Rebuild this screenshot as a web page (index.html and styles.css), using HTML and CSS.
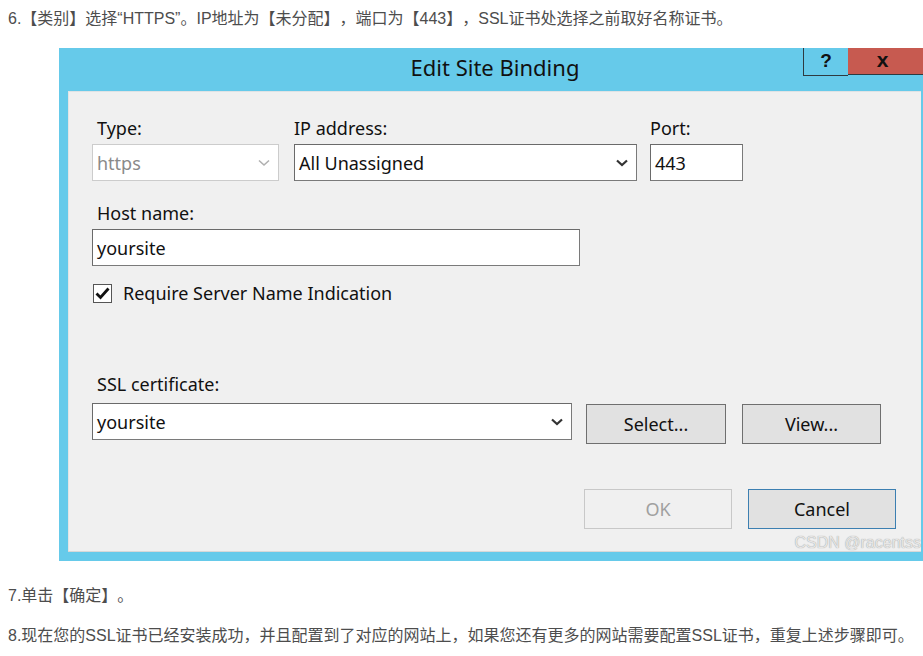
FILE: index.html
```html
<!DOCTYPE html>
<html lang="zh">
<head>
<meta charset="utf-8">
<title>Edit Site Binding</title>
<link rel="stylesheet" href="styles.css">
</head>
<body>
<p class="step step-first">6.【类别】选择“HTTPS”。IP地址为【未分配】，端口为【443】，SSL证书处选择之前取好名称证书。</p>

<div class="dialog">
  <div class="titlebar">
    <div class="title">Edit Site Binding</div>
    <div class="tb-buttons">
      <div class="tb-help">?</div>
      <div class="tb-close">x</div>
    </div>
  </div>
  <div class="panel">
    <div class="row row-top">
      <div class="field f-type">
        <div class="label">Type:</div>
        <div class="box select disabled"><span>https</span>
          <svg class="chev" width="12" height="8" viewBox="0 0 12 8"><path d="M1 1.5 L6 6 L11 1.5" fill="none" stroke="currentColor" stroke-width="1.6"/></svg>
        </div>
      </div>
      <div class="field f-ip">
        <div class="label">IP address:</div>
        <div class="box select"><span>All Unassigned</span>
          <svg class="chev" width="12" height="8" viewBox="0 0 12 8"><path d="M1 1.5 L6 6 L11 1.5" fill="none" stroke="currentColor" stroke-width="2.2"/></svg>
        </div>
      </div>
      <div class="field f-port">
        <div class="label">Port:</div>
        <div class="box"><span>443</span></div>
      </div>
    </div>

    <div class="field f-host">
      <div class="label">Host name:</div>
      <div class="box"><span>yoursite</span></div>
    </div>

    <div class="check-row">
      <div class="checkbox">
        <svg width="15" height="13" viewBox="0 0 15 13"><path d="M1.5 6.5 L5.5 10.5 L13.5 1.5" fill="none" stroke="#111" stroke-width="2.8"/></svg>
      </div>
      <div class="check-label">Require Server Name Indication</div>
    </div>

    <div class="field f-ssl">
      <div class="label">SSL certificate:</div>
      <div class="ssl-row">
        <div class="box select ssl-select"><span>yoursite</span>
          <svg class="chev" width="12" height="8" viewBox="0 0 12 8"><path d="M1 1.5 L6 6 L11 1.5" fill="none" stroke="currentColor" stroke-width="2.2"/></svg>
        </div>
        <div class="btn btn-select">Select...</div>
        <div class="btn btn-view">View...</div>
      </div>
    </div>

    <div class="footer">
      <div class="btn btn-ok">OK</div>
      <div class="btn btn-cancel">Cancel</div>
    </div>
  </div>
  <div class="watermark">CSDN @racentss</div>
</div>

<p class="step step-7">7.单击【确定】。</p>
<p class="step step-8">8.现在您的SSL证书已经安装成功，并且配置到了对应的网站上，如果您还有更多的网站需要配置SSL证书，重复上述步骤即可。</p>
</body>
</html>
```

FILE: styles.css
```css
html, body {
  margin: 0;
  padding: 0;
  background: #ffffff;
}

body {
  width: 923px;
  height: 656px;
  overflow: hidden;
  font-family: "Liberation Sans", "Noto Sans CJK SC", sans-serif;
}

.step {
  margin: 0;
  padding-left: 8px;
  font-size: 16px;
  line-height: 22px;
  color: #4d4d4d;
  white-space: nowrap;
  text-spacing-trim: space-all;
}

.step-first { padding-top: 8px; }
.step-7 { margin-top: 24px; }
.step-8 { margin-top: 18px; }

.dialog {
  position: relative;
  margin-top: 18px;
  margin-left: 59px;
  width: 864px;
  height: 513px;
  background: #66caea;
  display: flex;
  flex-direction: column;
  font-family: "Noto Sans", "Open Sans", sans-serif;
  color: #000;
}

.titlebar {
  height: 43px;
  display: flex;
  position: relative;
}

.title {
  flex: 1;
  text-align: center;
  font-size: 22px;
  line-height: 38px;
  color: #111;
  padding-left: 8px;
}

.tb-buttons {
  position: absolute;
  top: 0;
  right: 0;
  display: flex;
}

.tb-help {
  width: 44px;
  height: 27px;
  border-left: 1px solid #2e3a40;
  border-bottom: 1px solid #2e3a40;
  text-align: center;
  font-family: "Liberation Sans", sans-serif;
  font-weight: bold;
  font-size: 19px;
  line-height: 25px;
  color: #111;
}

.tb-close {
  width: 75px;
  height: 27px;
  background: #c75a50;
  border-bottom: 1px solid #2e3a40;
  text-align: center;
  font-family: "Liberation Sans", sans-serif;
  font-weight: bold;
  font-size: 21px;
  line-height: 23px;
  color: #111;
  padding-right: 6px;
  box-sizing: border-box;
}

.panel {
  margin-left: 9px;
  margin-right: 2px;
  height: 460px;
  background: #f0f0f0;
  border-top: 1px solid #dfe3e5;
  border-left: 1px solid #e4e4e4;
  box-shadow: 0 1px 0 #d8d8d8;
  box-sizing: border-box;
  padding: 24px 0 0 23px;
  position: relative;
}

.label {
  font-size: 18px;
  line-height: 24px;
  height: 28px;
  color: #111;
}

.f-type .label,
.f-host .label,
.f-ssl .label {
  padding-left: 5px;
}

.row-top {
  display: flex;
}

.box {
  height: 37px;
  box-sizing: border-box;
  background: #fff;
  border: 1px solid #7a7a7a;
  border-top-color: #6a6a6a;
  border-left-color: #6a6a6a;
  display: flex;
  align-items: center;
  padding-left: 4px;
  font-size: 18px;
  color: #111;
}

.box span { flex: 1; }

.select .chev {
  margin-right: 8px;
  color: #333;
}

.f-type .box { width: 187px; }
.f-ip { margin-left: 15px; }
.f-ip .box { width: 343px; }
.f-port { margin-left: 13px; }
.f-port .box { width: 93px; }

.disabled {
  border-color: #cccccc;
  color: #8a8a8a;
}
.disabled .chev { color: #b0b0b0; }

.f-host { margin-top: 20px; }
.f-host .box { width: 488px; }

.check-row {
  margin-top: 17px;
  display: flex;
  align-items: center;
  height: 20px;
}

.checkbox {
  width: 19px;
  height: 19px;
  box-sizing: border-box;
  border: 1px solid #555;
  background: #fff;
  display: flex;
  align-items: center;
  justify-content: center;
  margin-left: 1px;
}

.check-label {
  margin-left: 11px;
  font-size: 18px;
  color: #111;
}

.f-ssl { margin-top: 69px; }
.f-ssl .label { height: 31px; }

.ssl-row {
  display: flex;
  align-items: flex-start;
}

.ssl-select { width: 480px; }

.btn {
  height: 40px;
  box-sizing: border-box;
  background: #e1e1e1;
  border: 1px solid #6f6f6f;
  display: flex;
  align-items: center;
  justify-content: center;
  font-size: 18px;
  color: #111;
}

.btn-select {
  width: 140px;
  margin-left: 14px;
  margin-top: 1px;
}

.btn-view {
  width: 139px;
  margin-left: 16px;
  margin-top: 1px;
}

.footer {
  display: flex;
  margin-top: 45px;
  margin-left: 492px;
}

.btn-ok {
  width: 148px;
  background: #f0f0f0;
  border-color: #c8c8c8;
  color: #a0a0a0;
}

.btn-cancel {
  width: 148px;
  margin-left: 16px;
  border-color: #3c7fb1;
}

.watermark {
  position: absolute;
  right: 2px;
  bottom: 9px;
  font-family: "Liberation Sans", sans-serif;
  font-size: 16px;
  color: #e6e6e6;
  text-shadow: 0 0 1px #8a8a8a;
}
```
